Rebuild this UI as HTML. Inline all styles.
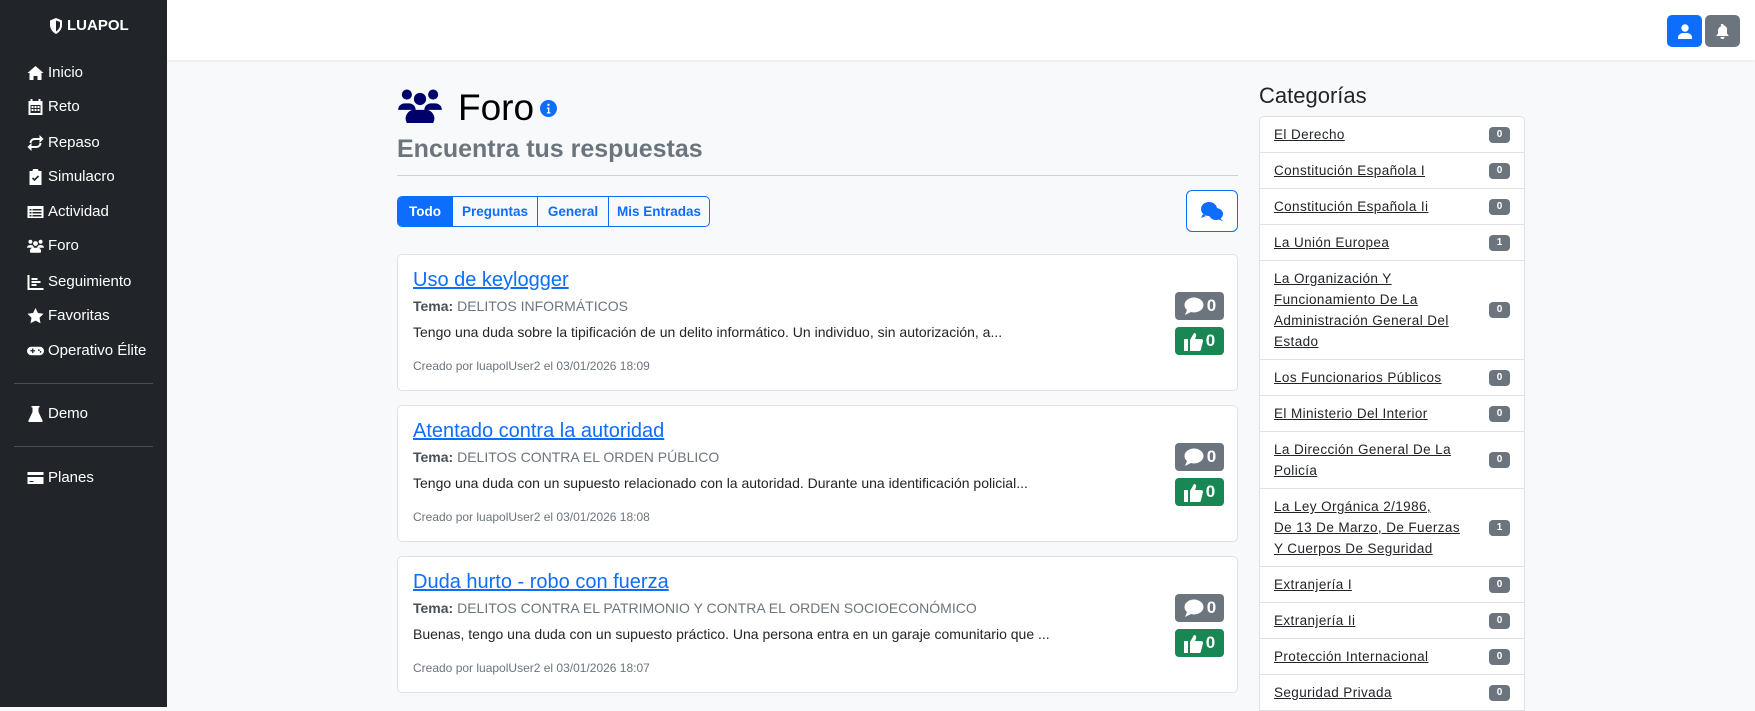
<!DOCTYPE html>
<html><head><meta charset="utf-8"><style>
*{box-sizing:border-box;margin:0;padding:0}
body{width:1755px;height:707px;overflow:hidden;background:#f8f9fa;font-family:"Liberation Sans",sans-serif;position:relative;color:#212529}
.side{position:absolute;left:0;top:0;width:167px;height:707px;background:#212529;color:#fff}
.logo{position:absolute;left:49px;top:17px;font-weight:bold;font-size:15px;display:flex;align-items:center;gap:4px}
.nav{position:absolute;left:27px;font-size:15px;display:flex;align-items:center;gap:4px;color:#fff}
.nav svg{width:17px;height:16px;fill:#fff}
.div{position:absolute;left:14px;width:139px;height:1px;background:#4b5056}
.top{position:absolute;left:167px;top:0;right:0;height:60px;background:#fff;box-shadow:0 1px 3px rgba(0,0,0,.08)}
.tb{position:absolute;top:15px;width:35px;height:32px;border-radius:5px;display:flex;align-items:center;justify-content:center}
h1{position:absolute;left:458px;top:86px;font-size:37px;font-weight:500;line-height:44px;color:#000}
.sub{position:absolute;left:397px;top:134px;font-size:25px;font-weight:bold;color:#6c757d;line-height:30px}
.hr{position:absolute;left:397px;top:175px;width:841px;height:1px;background:#cfd2d5}
.grp{position:absolute;left:397px;top:196px;height:31px;display:flex;border:1px solid #0d6efd;border-radius:5px;overflow:hidden;background:#f8f9fa}
.grp div{font-size:13.5px;font-weight:bold;color:#0d6efd;line-height:29px;border-left:1px solid #0d6efd;text-align:center}
.grp div:first-child{border-left:0;background:#0d6efd;color:#fff}
.chat{position:absolute;left:1186px;top:190px;width:52px;height:42px;border:1px solid #0d6efd;border-radius:6px;background:#fff;display:flex;align-items:center;justify-content:center}
.card{position:absolute;left:397px;width:841px;height:137px;background:#fff;border:1px solid #dee2e6;border-radius:5px}
.card .t{position:absolute;left:15px;top:14px;font-size:20px;color:#0d6efd;text-decoration:underline}
.card .tm{position:absolute;left:15px;top:43px;font-size:14px;color:#6c757d}
.card .tm b{color:#495057}
.card .bd{position:absolute;left:15px;top:69px;font-size:14px;color:#212529}
.card .cr{position:absolute;left:15px;top:104px;font-size:12px;color:#6c757d}
.bg{position:absolute;left:777px;width:49px;height:28px;border-radius:4px;color:#fff;font-weight:bold;font-size:17px;display:flex;align-items:center;justify-content:center;gap:2px}
.cat{position:absolute;left:1259px;top:83px;font-size:22px;font-weight:500;color:#212529}
.list{position:absolute;left:1259px;top:116px;width:266px;background:#fff;border:1px solid #dee2e6;border-radius:5px 5px 0 0}
.it{display:flex;align-items:center;justify-content:space-between;padding:7px 14px 7px 14px;border-top:1px solid #dee2e6;font-size:13.5px;line-height:21px}
.it:first-child{border-top:0}
.it span{color:#212529;text-decoration:underline;letter-spacing:.4px}
.it i{font-style:normal;background:#6c757d;color:#fff;font-size:10px;font-weight:bold;border-radius:4px;width:21px;height:16px;line-height:16px;text-align:center;flex:none}
</style></head><body>
<div class="side">
 <div class="logo"><svg width="14" height="16" viewBox="0 0 14 16"><path d="M7 0L13 2.5V7c0 4-3 7.5-6 9C4 14.5 1 11 1 7V2.5z" fill="#fff"/><path d="M7 2.5L11 4v3.3c0 2.7-2 5-4 6.2z" fill="#212529"/></svg>LUAPOL</div>
 <div class="nav" style="top:64px"><svg viewBox="0 0 16 16"><path d="M8 1L0 8h2v7h4v-4h4v4h4V8h2z"/></svg>Inicio</div>
 <div class="nav" style="top:98px"><svg viewBox="0 0 16 16"><path d="M3 0h2v2h6V0h2v2h2v14H1V2h2zM3 6v8h10V6z"/><path d="M4 7h2v2H4zm3 0h2v2H7zm3 0h2v2h-2zM4 10h2v2H4zm3 0h2v2H7zm3 0h2v2h-2z"/></svg>Reto</div>
 <div class="nav" style="top:134px"><svg viewBox="0 0 16 16"><path d="M2 8a5 5 0 015-5h5V0l4 4-4 4V5H7a3 3 0 00-3 3zM14 8a5 5 0 01-5 5H4v3l-4-4 4-4v3h5a3 3 0 003-3z"/></svg>Repaso</div>
 <div class="nav" style="top:168px"><svg viewBox="0 0 16 16"><path d="M2 2h3a3 3 0 016 0h3v14H2z"/><path d="M5 9l2 2 4-4" stroke="#212529" stroke-width="1.6" fill="none"/></svg>Simulacro</div>
 <div class="nav" style="top:203px"><svg viewBox="0 0 16 16"><path d="M0 2h16v12H0z"/><path d="M2 5h2v1.5H2zm3 0h9v1.5H5zM2 8h2v1.5H2zm3 0h9v1.5H5zM2 11h2v1.5H2zm3 0h9v1.5H5z" fill="#212529"/></svg>Actividad</div>
 <div class="nav" style="top:237px"><svg viewBox="0 0 20 16"><circle cx="4" cy="3" r="2.3"/><circle cx="16" cy="3" r="2.3"/><circle cx="10" cy="5" r="2.8"/><path d="M0 10a3 3 0 013-3h2a3 3 0 013 3zM12 10a3 3 0 013-3h2a3 3 0 013 3zM4 16a4 4 0 014-6h4a4 4 0 014 6z"/></svg>Foro</div>
 <div class="nav" style="top:273px"><svg viewBox="0 0 16 16"><path d="M0 1h2v13h14v2H0z"/><path d="M4 4h6v2H4zm0 3h9v2H4zm0 3h5v2H4z"/></svg>Seguimiento</div>
 <div class="nav" style="top:307px"><svg viewBox="0 0 16 16"><path d="M8 0l2.4 5 5.6.8-4 3.9 1 5.5L8 12.6 3 15.2l1-5.5-4-3.9L5.6 5z"/></svg>Favoritas</div>
 <div class="nav" style="top:342px"><svg viewBox="0 0 20 16"><rect x="0" y="3" width="20" height="10" rx="5"/><path d="M4 7h2V5h1.5v2h2v1.5h-2v2H6v-2H4z" fill="#212529"/><circle cx="14" cy="7" r="1" fill="#212529"/><circle cx="16" cy="9" r="1" fill="#212529"/></svg>Operativo Élite</div>
 <div class="div" style="top:383px"></div>
 <div class="nav" style="top:405px"><svg viewBox="0 0 16 16"><path d="M4 0h8v1.5h-1V6l4 8.5V16H1v-1.5L5 6V1.5H4z"/></svg>Demo</div>
 <div class="div" style="top:446px"></div>
 <div class="nav" style="top:469px"><svg viewBox="0 0 16 16"><path d="M0 2h16v3H0zM0 7h16v7H0z"/><path d="M2 11h4v1H2z" fill="#212529"/></svg>Planes</div>
</div>
<div class="top"></div>
<div class="tb" style="left:1667px;background:#0d6efd"><svg width="14" height="15" viewBox="0 0 14 15" fill="#fff"><circle cx="7" cy="4" r="3.7"/><path d="M0 15a5 5 0 015-6h4a5 5 0 015 6z"/></svg></div>
<div class="tb" style="left:1705px;background:#6c757d"><svg width="13" height="15" viewBox="0 0 13 15" fill="#fff"><path d="M6.5 0a1 1 0 011 1.2A4.5 4.5 0 0111 6.5v3l1.8 2.5H.2L2 9.5v-3a4.5 4.5 0 013.5-4.3A1 1 0 016.5 0zM4.5 13h4a2 2 0 01-4 0z"/></svg></div>

<svg style="position:absolute;left:397px;top:88px" width="46" height="35" viewBox="0 0 20 16" fill="#00006b"><circle cx="4" cy="3" r="2.3"/><circle cx="16" cy="3" r="2.3"/><circle cx="10" cy="5" r="2.8"/><path d="M0 10a3 3 0 013-3h2a3 3 0 013 3zM12 10a3 3 0 013-3h2a3 3 0 013 3zM4 16a4 4 0 014-6h4a4 4 0 014 6z"/></svg>
<h1>Foro</h1>
<svg style="position:absolute;left:540px;top:100px" width="17" height="17" viewBox="0 0 16 16"><circle cx="8" cy="8" r="8" fill="#0d6efd"/><circle cx="8" cy="4.5" r="1.1" fill="#fff"/><path d="M6.5 7h2.3v4.5h1v1.2H6.5v-1.2h1V8.2h-1z" fill="#fff"/></svg>
<div class="sub">Encuentra tus respuestas</div>
<div class="hr"></div>
<div class="grp"><div style="width:54px">Todo</div><div style="width:85px">Preguntas</div><div style="width:71px">General</div><div style="width:101px">Mis Entradas</div></div>
<div class="chat"><svg width="24" height="21" viewBox="0 0 24 21" fill="#0d6efd"><ellipse cx="9" cy="8" rx="8" ry="7"/><path d="M3 13l-2 4 5-2z"/><ellipse cx="16" cy="13" rx="7" ry="6"/><path d="M20 17l3 3-6-2z"/></svg></div>

<div class="card" style="top:254px">
 <div class="t">Uso de keylogger</div>
 <div class="tm"><b>Tema:</b> DELITOS INFORMÁTICOS</div>
 <div class="bd">Tengo una duda sobre la tipificación de un delito informático. Un individuo, sin autorización, a...</div>
 <div class="cr">Creado por luapolUser2 el 03/01/2026 18:09</div>
 <div class="bg" style="top:37px;background:#6c757d"><svg width="22" height="20" viewBox="0 0 22 20"><ellipse cx="11" cy="9" rx="9.5" ry="7.5" fill="#fff"/><path d="M4 14l-2 5 6-3z" fill="#fff"/></svg>0</div>
 <div class="bg" style="top:72px;background:#198754"><svg width="20" height="19" viewBox="0 0 20 19" fill="#fff"><rect x="0" y="7" width="4" height="12"/><path d="M6 8l4-7c2 0 2.5 1.5 2 3.5L11 7h6a2 2 0 012 2l-2 8a2 2 0 01-2 2H6z"/></svg>0</div>
</div>
<div class="card" style="top:405px">
 <div class="t">Atentado contra la autoridad</div>
 <div class="tm"><b>Tema:</b> DELITOS CONTRA EL ORDEN PÚBLICO</div>
 <div class="bd">Tengo una duda con un supuesto relacionado con la autoridad. Durante una identificación policial...</div>
 <div class="cr">Creado por luapolUser2 el 03/01/2026 18:08</div>
 <div class="bg" style="top:37px;background:#6c757d"><svg width="22" height="20" viewBox="0 0 22 20"><ellipse cx="11" cy="9" rx="9.5" ry="7.5" fill="#fff"/><path d="M4 14l-2 5 6-3z" fill="#fff"/></svg>0</div>
 <div class="bg" style="top:72px;background:#198754"><svg width="20" height="19" viewBox="0 0 20 19" fill="#fff"><rect x="0" y="7" width="4" height="12"/><path d="M6 8l4-7c2 0 2.5 1.5 2 3.5L11 7h6a2 2 0 012 2l-2 8a2 2 0 01-2 2H6z"/></svg>0</div>
</div>
<div class="card" style="top:556px">
 <div class="t">Duda hurto - robo con fuerza</div>
 <div class="tm"><b>Tema:</b> DELITOS CONTRA EL PATRIMONIO Y CONTRA EL ORDEN SOCIOECONÓMICO</div>
 <div class="bd">Buenas, tengo una duda con un supuesto práctico. Una persona entra en un garaje comunitario que ...</div>
 <div class="cr">Creado por luapolUser2 el 03/01/2026 18:07</div>
 <div class="bg" style="top:37px;background:#6c757d"><svg width="22" height="20" viewBox="0 0 22 20"><ellipse cx="11" cy="9" rx="9.5" ry="7.5" fill="#fff"/><path d="M4 14l-2 5 6-3z" fill="#fff"/></svg>0</div>
 <div class="bg" style="top:72px;background:#198754"><svg width="20" height="19" viewBox="0 0 20 19" fill="#fff"><rect x="0" y="7" width="4" height="12"/><path d="M6 8l4-7c2 0 2.5 1.5 2 3.5L11 7h6a2 2 0 012 2l-2 8a2 2 0 01-2 2H6z"/></svg>0</div>
</div>

<div class="cat">Categorías</div>
<div class="list">
 <div class="it"><span>El Derecho</span><i>0</i></div>
 <div class="it"><span>Constitución Española I</span><i>0</i></div>
 <div class="it"><span>Constitución Española Ii</span><i>0</i></div>
 <div class="it"><span>La Unión Europea</span><i>1</i></div>
 <div class="it"><span>La Organización Y<br>Funcionamiento De La<br>Administración General Del<br>Estado</span><i>0</i></div>
 <div class="it"><span>Los Funcionarios Públicos</span><i>0</i></div>
 <div class="it"><span>El Ministerio Del Interior</span><i>0</i></div>
 <div class="it"><span>La Dirección General De La<br>Policía</span><i>0</i></div>
 <div class="it"><span>La Ley Orgánica 2/1986,<br>De 13 De Marzo, De Fuerzas<br>Y Cuerpos De Seguridad</span><i>1</i></div>
 <div class="it"><span>Extranjería I</span><i>0</i></div>
 <div class="it"><span>Extranjería Ii</span><i>0</i></div>
 <div class="it"><span>Protección Internacional</span><i>0</i></div>
 <div class="it"><span>Seguridad Privada</span><i>0</i></div>
</div>
</body></html>
